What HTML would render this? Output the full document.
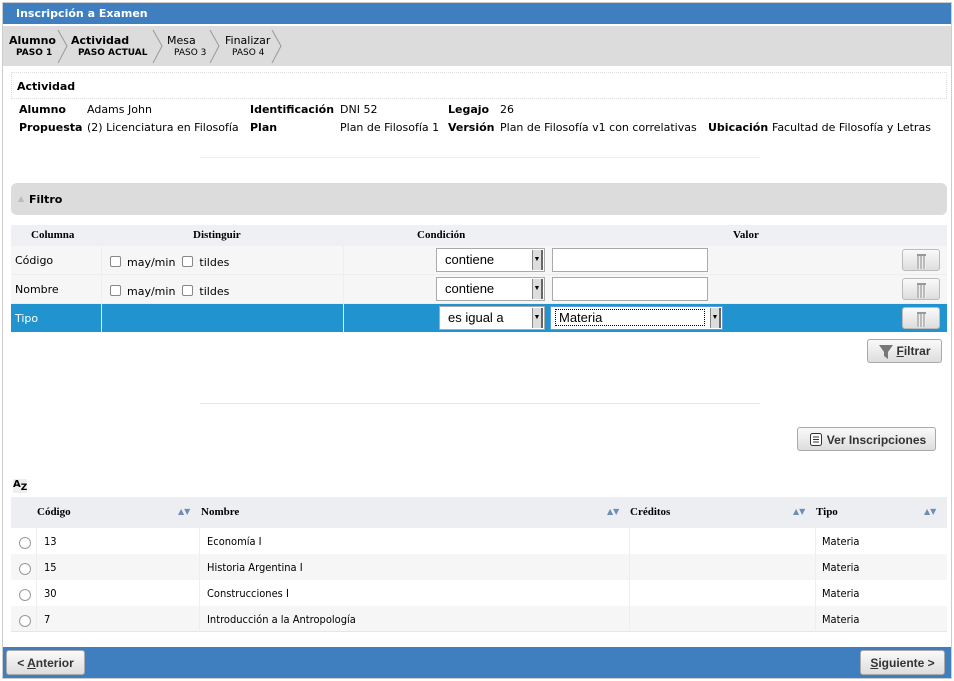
<!DOCTYPE html><html><head><meta charset="utf-8"><style>
*{box-sizing:border-box;margin:0;padding:0}
body{width:954px;height:681px;background:#fff;font-family:"DejaVu Sans",Verdana,sans-serif;font-size:11px;color:#000;position:relative;overflow:hidden}
.a{position:absolute;white-space:nowrap}
b{font-weight:bold}
.sel{position:absolute;background:#fff;border:1px solid #aaa;font-family:"Liberation Sans",sans-serif;font-size:13px;padding:3px 8px}
.arr{position:absolute;right:1px;top:1px;bottom:1px;width:11px;background:#ddd;border-left:1px solid #888;border-right:2px solid #666;font-size:7px;text-align:center;line-height:20px}
.inp{position:absolute;background:#fff;border:1px solid #aaa}
.btn{position:absolute;background:linear-gradient(#fafafa,#ddd);border:1px solid #aaa;border-radius:3px;font-family:"Liberation Sans",sans-serif;font-weight:bold;font-size:12px;color:#333;text-align:center}
.trash{position:absolute;left:902px;width:38px;height:22px;background:linear-gradient(#fafafa,#ddd);border:1px solid #bbb;border-radius:3px}
.trash:after{content:"";position:absolute;left:14px;top:4px;width:9px;height:13px;border-top:2px solid #999;background:repeating-linear-gradient(90deg,#bbb 0 2px,#eee 2px 3px)}
.cb{display:inline-block;width:11px;height:11px;border:1px solid #888;border-radius:2px;vertical-align:-1px;margin-right:6px;background:#fff}
.th{font-family:"Liberation Serif",serif;font-weight:bold;font-size:11px}
.rd{position:absolute;left:19px;width:12px;height:12px;border:1px solid #999;border-radius:50%;background:#fff}
.c{font-family:"DejaVu Sans Condensed","Liberation Sans",sans-serif;font-size:11px}
</style></head><body>
<div class="a" style="left:2px;top:2px;width:950px;height:677px;border:1px solid #ccc"></div>
<div class="a" style="left:3px;top:3px;width:948px;height:21px;background:#3f7fbf;color:#fff;font-weight:bold;padding:4px 13px">Inscripción a Examen</div>
<div class="a" style="left:3px;top:26px;width:948px;height:40px;background:#dcdcdc"></div>
<svg class="a" style="left:0;top:26px" width="300" height="40"><g fill="none" stroke="#999"><path d="M58 4l9 16-9 17M153 4l9 16-9 17M210 4l9 16-9 17M272 4l9 16-9 17"/></g></svg>
<div class="a" style="left:9px;top:34px;font-weight:bold">Alumno</div><div class="a" style="left:16px;top:48px;font-size:9px;font-weight:bold">PASO 1</div>
<div class="a" style="left:71px;top:34px;font-weight:bold">Actividad</div><div class="a" style="left:78px;top:48px;font-size:9px;font-weight:bold">PASO ACTUAL</div>
<div class="a" style="left:167px;top:34px">Mesa</div><div class="a" style="left:174px;top:48px;font-size:9px">PASO 3</div>
<div class="a" style="left:225px;top:34px">Finalizar</div><div class="a" style="left:232px;top:48px;font-size:9px">PASO 4</div>
<div class="a" style="left:11px;top:72px;width:936px;height:27px;border:1px dotted #ddd"></div>
<div class="a" style="left:17px;top:80px;font-weight:bold">Actividad</div>
<div class="a" style="left:19px;top:103px"><b>Alumno</b></div><div class="a" style="left:87px;top:103px">Adams John</div>
<div class="a" style="left:250px;top:103px"><b>Identificación</b></div><div class="a" style="left:340px;top:103px">DNI 52</div>
<div class="a" style="left:448px;top:103px"><b>Legajo</b></div><div class="a" style="left:500px;top:103px">26</div>
<div class="a" style="left:19px;top:121px"><b>Propuesta</b></div><div class="a" style="left:87px;top:121px">(2) Licenciatura en Filosofía</div>
<div class="a" style="left:250px;top:121px"><b>Plan</b></div><div class="a" style="left:340px;top:121px">Plan de Filosofía 1</div>
<div class="a" style="left:448px;top:121px"><b>Versión</b></div><div class="a" style="left:500px;top:121px">Plan de Filosofía v1 con correlativas</div>
<div class="a" style="left:708px;top:121px"><b>Ubicación</b></div><div class="a" style="left:772px;top:121px">Facultad de Filosofía y Letras</div>
<div class="a" style="left:200px;top:157px;width:560px;height:1px;background:#eee"></div>
<div class="a" style="left:11px;top:183px;width:936px;height:32px;background:#dcdcdc;border-radius:6px;padding:10px 18px;font-weight:bold"><span style="color:#bbb;font-size:8px;position:absolute;left:7px;top:11px">▲</span>Filtro</div>
<div class="a" style="left:11px;top:225px;width:936px;height:21px;background:#eef0f3"></div>
<div class="a th" style="left:31px;top:229px">Columna</div><div class="a th" style="left:193px;top:229px">Distinguir</div><div class="a th" style="left:417px;top:229px">Condición</div><div class="a th" style="left:733px;top:229px">Valor</div>
<div class="a" style="left:11px;top:246px;width:936px;height:29px;background:#f6f6f6;border-bottom:1px solid #eee"></div>
<div class="a" style="left:11px;top:275px;width:936px;height:29px;background:#f6f6f6;border-bottom:1px solid #eee"></div>
<div class="a" style="left:11px;top:304px;width:936px;height:28px;background:#2194d0"></div>
<div class="a" style="left:101px;top:246px;width:1px;height:86px;background:#eee"></div>
<div class="a" style="left:343px;top:246px;width:1px;height:86px;background:#eee"></div>
<div class="a" style="left:15px;top:254px">Código</div><div class="a" style="left:15px;top:283px">Nombre</div><div class="a" style="left:15px;top:312px;color:#fff">Tipo</div>
<div class="a" style="left:110px;top:256px"><span class="cb"></span>may/min &nbsp;<span class="cb"></span>tildes</div>
<div class="a" style="left:110px;top:285px"><span class="cb"></span>may/min &nbsp;<span class="cb"></span>tildes</div>
<div class="sel" style="left:436px;top:248px;width:109px;height:24px">contiene<span class="arr">▼</span></div>
<div class="sel" style="left:436px;top:277px;width:109px;height:24px">contiene<span class="arr">▼</span></div>
<div class="sel" style="left:439px;top:306px;width:106px;height:24px">es igual a<span class="arr">▼</span></div>
<div class="inp" style="left:552px;top:248px;width:156px;height:24px"></div>
<div class="inp" style="left:552px;top:277px;width:156px;height:24px"></div>
<div class="sel" style="left:550px;top:306px;width:173px;height:24px;border-color:#5aa0e0;padding:2px 4px"><span style="border:1px dotted #000;display:block;width:150px;padding:0 3px">Materia</span><span class="arr">▼</span></div>
<div class="trash" style="top:249px"></div><div class="trash" style="top:278px"></div><div class="trash" style="top:307px"></div>
<div class="btn" style="left:867px;top:339px;width:75px;height:24px;padding:4px 0 0 18px"><svg style="position:absolute;left:10px;top:4px" width="16" height="16"><path d="M1 1h14l-5 7v7l-4-3v-4z" fill="#777"/></svg><u>F</u>iltrar</div>
<div class="a" style="left:200px;top:403px;width:560px;height:1px;background:#e6e6e6"></div>
<div class="btn" style="left:797px;top:427px;width:139px;height:24px;padding:5px 0 0 20px"><svg style="position:absolute;left:11px;top:4px" width="14" height="15"><rect x="1.5" y="1.5" width="11" height="12" rx="2" fill="#fff" stroke="#333"/><path d="M4 5h6M4 7.5h6M4 10h6" stroke="#333"/></svg>Ver Inscripciones</div>
<div class="a" style="left:13px;top:479px;font-size:10px;font-weight:bold;background:#eee">A<sub style="font-size:9px">Z</sub></div>
<div class="a" style="left:11px;top:497px;width:936px;height:31px;background:#eceef1"></div>
<div class="a th" style="left:37px;top:506px">Código</div><div class="a th" style="left:201px;top:506px">Nombre</div><div class="a th" style="left:630px;top:506px">Créditos</div><div class="a th" style="left:816px;top:506px">Tipo</div>
<div class="a" style="left:178px;top:507px;font-size:8px;color:#6d8fb5">▲▼</div><div class="a" style="left:607px;top:507px;font-size:8px;color:#6d8fb5">▲▼</div><div class="a" style="left:793px;top:507px;font-size:8px;color:#6d8fb5">▲▼</div><div class="a" style="left:924px;top:507px;font-size:8px;color:#6d8fb5">▲▼</div>
<div class="a" style="left:11px;top:528px;width:936px;height:26px;background:#fff"></div>
<div class="a" style="left:11px;top:554px;width:936px;height:26px;background:#f6f6f6"></div>
<div class="a" style="left:11px;top:580px;width:936px;height:26px;background:#fff"></div>
<div class="a" style="left:11px;top:606px;width:936px;height:26px;background:#f6f6f6;border-bottom:1px solid #e6e6e6"></div>
<div class="a" style="left:36px;top:528px;width:1px;height:104px;background:#eee"></div>
<div class="a" style="left:199px;top:528px;width:1px;height:104px;background:#eee"></div>
<div class="a" style="left:629px;top:528px;width:1px;height:104px;background:#eee"></div>
<div class="a" style="left:815px;top:528px;width:1px;height:104px;background:#eee"></div>
<div class="rd" style="top:537px"></div><div class="rd" style="top:563px"></div><div class="rd" style="top:589px"></div><div class="rd" style="top:615px"></div>
<div class="a c" style="left:44px;top:535px">13</div><div class="a c" style="left:207px;top:535px">Economía I</div><div class="a c" style="left:822px;top:535px">Materia</div>
<div class="a c" style="left:44px;top:561px">15</div><div class="a c" style="left:207px;top:561px">Historia Argentina I</div><div class="a c" style="left:822px;top:561px">Materia</div>
<div class="a c" style="left:44px;top:587px">30</div><div class="a c" style="left:207px;top:587px">Construcciones I</div><div class="a c" style="left:822px;top:587px">Materia</div>
<div class="a c" style="left:44px;top:613px">7</div><div class="a c" style="left:207px;top:613px">Introducción a la Antropología</div><div class="a c" style="left:822px;top:613px">Materia</div>
<div class="a" style="left:3px;top:647px;width:948px;height:31px;background:#3f7fbf"></div>
<div class="btn" style="left:6px;top:650px;width:79px;height:25px;padding-top:5px">&lt; <u>A</u>nterior</div>
<div class="btn" style="left:860px;top:650px;width:85px;height:25px;padding-top:5px"><u>S</u>iguiente &gt;</div>
</body></html>
